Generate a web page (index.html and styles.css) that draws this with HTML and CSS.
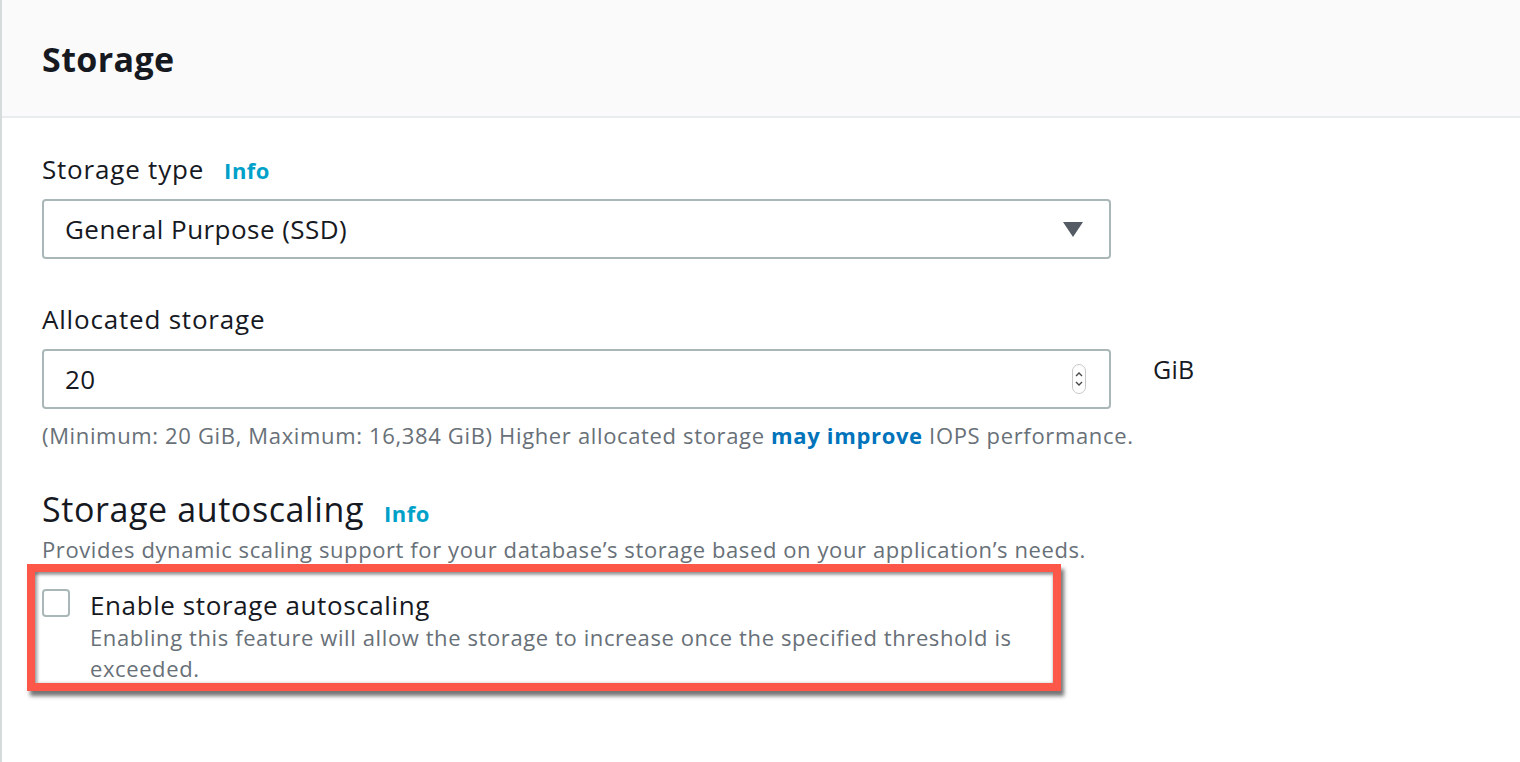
FILE: index.html
```html
<!DOCTYPE html>
<html lang="en">
<head>
<meta charset="utf-8">
<title>Storage</title>
<link rel="stylesheet" href="styles.css">
</head>
<body>
<div class="panel">
  <div class="panel-header">
    <h2 class="panel-title">Storage</h2>
  </div>
  <div class="panel-body">
    <div class="field field-type">
      <div class="label-row">
        <span class="label">Storage type</span>
        <a class="info">Info</a>
      </div>
      <div class="select">
        <span class="select-value">General Purpose (SSD)</span>
        <svg class="caret" width="20" height="16" viewBox="0 0 20 16"><path d="M0 0 H20 L10 15 Z" fill="#545b64"/></svg>
      </div>
    </div>

    <div class="field field-alloc">
      <div class="label-row">
        <span class="label">Allocated storage</span>
      </div>
      <div class="input-row">
        <div class="input">
          <span class="input-value">20</span>
          <span class="spinner">
            <svg width="14" height="30" viewBox="0 0 14 30">
              <rect x="0.5" y="0.5" width="13" height="29" rx="6.5" fill="#fff" stroke="#c8c8c8"/>
              <path d="M4 12 L7 9 L10 12" fill="none" stroke="#444" stroke-width="1.3"/>
              <path d="M4 18 L7 21 L10 18" fill="none" stroke="#444" stroke-width="1.3"/>
            </svg>
          </span>
        </div>
        <span class="unit">GiB</span>
      </div>
      <p class="hint">(Minimum: 20 GiB, Maximum: 16,384 GiB) Higher allocated storage <a class="link">may improve</a> IOPS performance.</p>
    </div>

    <div class="autoscale">
      <div class="heading-row">
        <h3 class="sub-heading">Storage autoscaling</h3>
        <a class="info">Info</a>
      </div>
      <p class="desc">Provides dynamic scaling support for your database’s storage based on your application’s needs.</p>
      <div class="highlight">
        <div class="check-row">
          <span class="checkbox"></span>
          <div class="check-text">
            <div class="check-label">Enable storage autoscaling</div>
            <div class="check-desc">Enabling this feature will allow the storage to increase once the specified threshold is exceeded.</div>
          </div>
        </div>
      </div>
    </div>
  </div>
</div>
</body>
</html>
```

FILE: styles.css
```css
* { box-sizing: border-box; }
html, body { margin: 0; padding: 0; background: #fff; }
body {
  font-family: "Open Sans", "Noto Sans", sans-serif;
  color: #16191f;
  width: 1520px;
  height: 762px;
  overflow: hidden;
}
.panel {
  border-left: 2px solid #d5dbdb;
  min-height: 762px;
}
.panel-header {
  background: #fafafa;
  height: 118px;
  border-bottom: 2px solid #eaeded;
  padding: 36px 0 0 40px;
}
.panel-title {
  margin: 0;
  font-size: 34px;
  font-weight: 700;
  line-height: 46px;
  letter-spacing: 0.4px;
}
.panel-body {
  padding: 33px 0 0 40px;
}
.label-row {
  display: flex;
  align-items: baseline;
  gap: 20px;
  height: 36px;
}
.label {
  font-size: 26px;
  line-height: 36px;
  letter-spacing: 0.8px;
}
.info {
  color: #00a1c9;
  font-weight: 700;
  font-size: 22px;
  letter-spacing: 0.5px;
}
.select, .input {
  width: 1069px;
  height: 60px;
  border: 2px solid #aab7b8;
  border-radius: 4px;
  display: flex;
  align-items: center;
  justify-content: space-between;
  padding: 0 26px 0 21px;
  margin-top: 12px;
  font-size: 26px;
  letter-spacing: 0.45px;
}
.caret { margin-top: 2px; }
.field-alloc { margin-top: 42px; }
.input { padding-right: 23px; }
.input-row {
  display: flex;
  align-items: flex-start;
  gap: 42px;
}
.unit {
  font-size: 25px;
  line-height: 36px;
  margin-top: 14px;
  letter-spacing: 0.3px;
}
.spinner { display: flex; }
.hint {
  margin: 10px 0 0;
  font-size: 22px;
  line-height: 32px;
  color: #687078;
  letter-spacing: 0.65px;
}
.link {
  color: #0073bb;
  font-weight: 700;
}
.autoscale { margin-top: 37px; }
.heading-row {
  display: flex;
  align-items: baseline;
  gap: 20px;
}
.sub-heading {
  margin: 0;
  font-size: 34px;
  font-weight: 400;
  line-height: 42px;
  letter-spacing: 0.6px;
}
.desc {
  margin: 3px 0 0;
  font-size: 22px;
  line-height: 32px;
  color: #687078;
  letter-spacing: 0.6px;
}
.highlight {
  margin: -1px 0 0 -15px;
  width: 1034px;
  height: 127px;
  border: 8px solid #fd574a;
  box-shadow: 3px 5px 4px rgba(0, 0, 0, 0.55), inset 0 3px 3px rgba(0, 0, 0, 0.35), inset 3px 0 3px rgba(0,0,0,0.25);
  padding: 17px 0 0 7px;
}
.check-row {
  display: flex;
  align-items: flex-start;
  gap: 20px;
}
.checkbox {
  width: 28px;
  height: 28px;
  border: 2px solid #aab7b8;
  border-radius: 4px;
  flex: none;
}
.check-label {
  font-size: 26px;
  line-height: 34px;
  margin-top: -1px;
  letter-spacing: 0.6px;
}
.check-desc {
  font-size: 22px;
  line-height: 31px;
  color: #687078;
  width: 940px;
  letter-spacing: 0.6px;
}
```
